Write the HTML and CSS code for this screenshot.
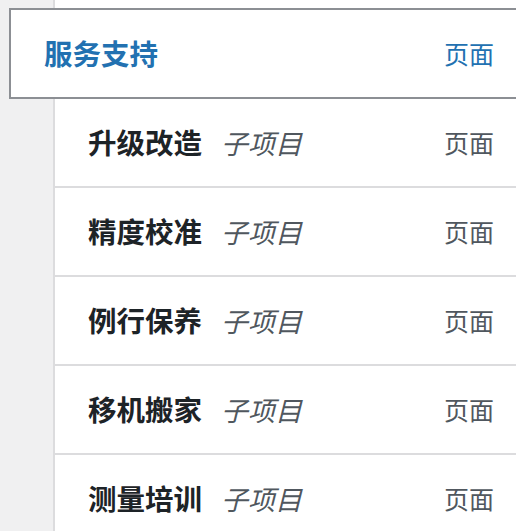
FILE: index.html
```html
<!DOCTYPE html>
<html lang="zh-CN">
<head>
    <meta charset="UTF-8">
    <meta name="viewport" content="width=device-width, initial-scale=1.0">
    <title>菜单结构</title>
    <link rel="stylesheet" href="styles.css">
</head>
<body>
    <div class="menu-panel">
        <div class="menu-item parent">
            <span class="item-title">服务支持</span>
            <span class="item-type">页面</span>
        </div>
        <div class="menu-item">
            <span class="item-title">升级改造</span>
            <span class="is-submenu">子项目</span>
            <span class="item-type">页面</span>
        </div>
        <div class="menu-item">
            <span class="item-title">精度校准</span>
            <span class="is-submenu">子项目</span>
            <span class="item-type">页面</span>
        </div>
        <div class="menu-item">
            <span class="item-title">例行保养</span>
            <span class="is-submenu">子项目</span>
            <span class="item-type">页面</span>
        </div>
        <div class="menu-item">
            <span class="item-title">移机搬家</span>
            <span class="is-submenu">子项目</span>
            <span class="item-type">页面</span>
        </div>
        <div class="menu-item">
            <span class="item-title">测量培训</span>
            <span class="is-submenu">子项目</span>
            <span class="item-type">页面</span>
        </div>
    </div>
</body>
</html>
```

FILE: styles.css
```css
body {
    font-family: "Noto Sans CJK SC", "Noto Sans", sans-serif;
    margin: 0;
    padding: 0;
    background-color: #f0f0f1;
    overflow: hidden;
}
.menu-panel {
    margin-left: 53px;
    padding-top: 8px;
    min-height: 531px;
    background: #fff;
    border-left: 2px solid #dcdcde;
}
.menu-item {
    display: flex;
    align-items: center;
    gap: 19px;
    height: 87px;
    padding: 0 22px 0 33px;
    border-bottom: 2px solid #dcdcde;
}
.menu-item.parent {
    margin-left: -46px;
    margin-right: -10px;
    padding-right: 30px;
    background: #fff;
    border: 2px solid #8c8f94;
}
.item-title {
    font-size: 28.5px;
    font-weight: bold;
    color: #1d2327;
    line-height: 1;
}
.parent .item-title {
    color: #2271b1;
}
.is-submenu {
    font-size: 27px;
    font-style: italic;
    color: #50575e;
    line-height: 1;
}
.item-type {
    margin-left: auto;
    font-size: 25px;
    color: #50575e;
    line-height: 1;
}
.parent .item-type {
    color: #2271b1;
}
```
